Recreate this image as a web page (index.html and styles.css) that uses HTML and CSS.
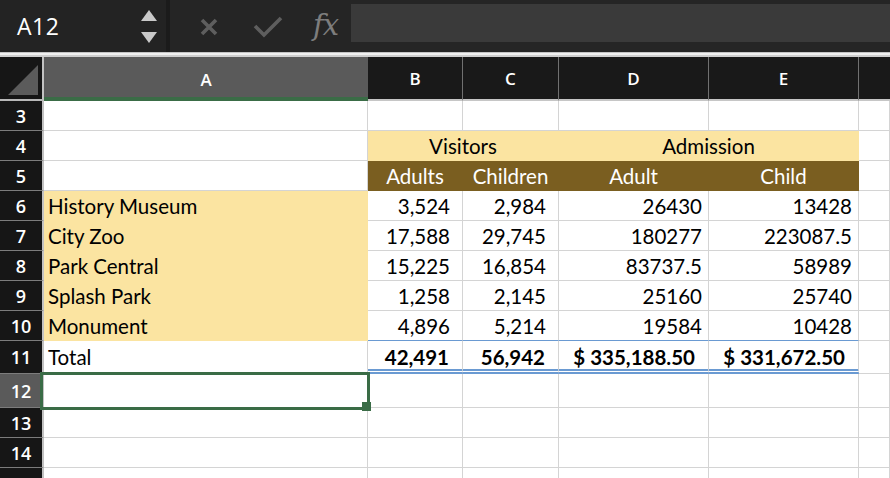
FILE: index.html
```html
<!DOCTYPE html>
<html>
<head>
<meta charset="utf-8">
<link rel="stylesheet" href="styles.css">
</head>
<body>
<div class="toolbar">
  <div class="namebox">
    <span class="cellref">A12</span>
    <span class="spin">
      <svg width="18" height="36" viewBox="0 0 18 36"><polygon points="9,1 17,12 1,12" fill="#c9c9c9"/><polygon points="1,23 17,23 9,34" fill="#c9c9c9"/></svg>
    </span>
  </div>
  <div class="sep"></div>
  <div class="fbar">
    <span class="ic ic-x"><svg width="20" height="20" viewBox="0 0 20 20"><path d="M3 3 L17 17 M17 3 L3 17" stroke="#5e5e5e" stroke-width="3.6" stroke-linecap="butt"/></svg></span>
    <span class="ic ic-check"><svg width="30" height="22" viewBox="0 0 30 22"><path d="M2 10 L11 19 L28 2" stroke="#5e5e5e" stroke-width="3.6" fill="none"/></svg></span>
    <span class="fx">fx</span>
    <div class="finput"></div>
  </div>
</div>
<div class="band"></div>
<div class="grid">
  <div class="corner"><svg width="42" height="43" viewBox="0 0 42 43"><polygon points="8,38 38,38 38,8" fill="#5b5b5b"/></svg></div>
  <div class="ch ch-sel">A</div>
  <div class="ch">B</div>
  <div class="ch">C</div>
  <div class="ch">D</div>
  <div class="ch">E</div>
  <div class="ch ch-last"></div>

  <div class="rh">3</div><div class="c"></div><div class="c"></div><div class="c"></div><div class="c"></div><div class="c"></div><div class="c"></div>

  <div class="rh">4</div><div class="c"></div><div class="c lt span2 ctr">Visitors</div><div class="c lt span2 ctr">Admission</div><div class="c"></div>

  <div class="rh">5</div><div class="c"></div><div class="c dk ctr">Adults</div><div class="c dk ctr">Children</div><div class="c dk ctr">Adult</div><div class="c dk ctr">Child</div><div class="c"></div>

  <div class="rh">6</div><div class="c lt name">History Museum</div><div class="c num">3,524</div><div class="c num">2,984</div><div class="c num2">26430</div><div class="c num2">13428</div><div class="c"></div>
  <div class="rh">7</div><div class="c lt name">City Zoo</div><div class="c num">17,588</div><div class="c num">29,745</div><div class="c num2">180277</div><div class="c num2">223087.5</div><div class="c"></div>
  <div class="rh">8</div><div class="c lt name">Park Central</div><div class="c num">15,225</div><div class="c num">16,854</div><div class="c num2">83737.5</div><div class="c num2">58989</div><div class="c"></div>
  <div class="rh">9</div><div class="c lt name">Splash Park</div><div class="c num">1,258</div><div class="c num">2,145</div><div class="c num2">25160</div><div class="c num2">25740</div><div class="c"></div>
  <div class="rh">10</div><div class="c lt name">Monument</div><div class="c num bt">4,896</div><div class="c num bt">5,214</div><div class="c num2 bt">19584</div><div class="c num2 bt">10428</div><div class="c"></div>

  <div class="rh">11</div><div class="c name">Total</div><div class="c num tot">42,491</div><div class="c num tot">56,942</div><div class="c num tot">$ 335,188.50</div><div class="c num tot">$ 331,672.50</div><div class="c"></div>

  <div class="rh rh-sel">12</div><div class="c"></div><div class="c"></div><div class="c"></div><div class="c"></div><div class="c"></div><div class="c"></div>
  <div class="rh">13</div><div class="c"></div><div class="c"></div><div class="c"></div><div class="c"></div><div class="c"></div><div class="c"></div>
  <div class="rh">14</div><div class="c"></div><div class="c"></div><div class="c"></div><div class="c"></div><div class="c"></div><div class="c"></div>
  <div class="rh rh-cut">15</div><div class="c"></div><div class="c"></div><div class="c"></div><div class="c"></div><div class="c"></div><div class="c"></div>

  <div class="selection"></div>
  <div class="handle"></div>
</div>
</body>
</html>
```
FILE: styles.css
```css
html, body {
  margin: 0;
  padding: 0;
  background: #ffffff;
  overflow: hidden;
  width: 890px;
  height: 478px;
}
body {
  font-family: "Open Sans", "Liberation Sans", sans-serif;
}
.toolbar {
  height: 52px;
  background: #252525;
  display: flex;
  align-items: stretch;
}
.namebox {
  width: 166px;
  background: #232323;
  display: flex;
  align-items: center;
  justify-content: space-between;
  padding: 0 8px 0 17px;
  box-sizing: border-box;
}
.cellref {
  color: #ffffff;
  font-size: 23px;
  letter-spacing: 0.5px;
}
.spin {
  display: flex;
  align-items: center;
  margin-top: 2px;
}
.sep {
  width: 4px;
  background: #1b1b1b;
}
.fbar {
  flex: 1;
  display: flex;
  align-items: center;
  padding-left: 29px;
}
.ic {
  display: flex;
  align-items: center;
}
.ic-x { margin-right: 34px; margin-top: 2px; }
.ic-check { margin-right: 30px; margin-top: 2px; }
.fx {
  font-family: "DejaVu Serif", "Liberation Serif", serif;
  font-style: italic;
  color: #7d7d7d;
  font-size: 29px;
  line-height: 1;
  margin-right: 13px;
  margin-top: -2px;
  letter-spacing: -1px;
}
.finput {
  flex: 1;
  height: 38px;
  margin-top: -6px;
  background: #3a3a3a;
}
.band {
  height: 5px;
  background: linear-gradient(#c4c4c4 0, #c4c4c4 1px, #f0f0f0 1px, #f0f0f0 3px, #cfcfcf 3px);
}
.grid {
  position: relative;
  display: grid;
  grid-template-columns: 44px 324px 95px 96px 150px 150px 31px;
  grid-template-rows: 44px repeat(8, 30px) 33px 34px 30px 30px 30px;
  font-family: "Lato", "Open Sans", sans-serif;
  font-size: 20.5px;
  color: #000;
}
.corner {
  background: #161616;
  border-right: 2px solid #c2c2c2;
  border-bottom: 2px solid #b8b8b8;
  box-sizing: border-box;
}
.corner svg { display: block; }
.ch {
  background: #191919;
  color: #ffffff;
  font-family: "Open Sans", "Liberation Sans", sans-serif;
  font-weight: 600;
  font-size: 17px;
  display: flex;
  align-items: center;
  justify-content: center;
  border-right: 1px solid #707070;
  border-bottom: 2px solid #c6c6c6;
  box-sizing: border-box;
  padding-top: 1px;
}
.ch-sel {
  background: #5a5a5a;
  border-bottom: 4px solid #3a6c46;
  border-right: none;
  padding-top: 5px;
}
.ch-last { border-right: none; }
.rh {
  background: #161616;
  color: #ffffff;
  font-family: "Open Sans", "Liberation Sans", sans-serif;
  font-weight: 600;
  font-size: 18px;
  display: flex;
  align-items: center;
  justify-content: center;
  border-right: 2px solid #c2c2c2;
  border-bottom: 1px solid #7c7c7c;
  box-sizing: border-box;
}
.rh-sel { background: #5a5a5a; }
.rh-cut { align-items: flex-start; padding-top: 4px; }
.c {
  border-right: 1px solid #d4d4d4;
  border-bottom: 1px solid #d4d4d4;
  box-sizing: border-box;
  display: flex;
  align-items: center;
  white-space: nowrap;
  overflow: hidden;
}
.lt { background: #fbe4a1; border-color: #fbe4a1; }
.dk { background: #7a5e20; border-color: #7a5e20; color: #ffffff; }
.span2 { grid-column: span 2; }
.ctr { justify-content: center; }
.name { padding-left: 4px; }
.num { justify-content: flex-end; padding-right: 12px; }
.num2 { justify-content: flex-end; padding-right: 6px; }
.bt { border-bottom-color: #6a9ad2; }
.tot {
  font-weight: 700;
  border-bottom: 5px double #6a9ad2;
  padding-top: 3px;
  padding-right: 13px;
}
.selection {
  position: absolute;
  left: 40px;
  top: 315px;
  width: 330px;
  height: 38px;
  border: 3px solid #3a6c46;
  box-sizing: border-box;
}
.handle {
  position: absolute;
  left: 362px;
  top: 345px;
  width: 9px;
  height: 9px;
  background: #3a6c46;
}
```
